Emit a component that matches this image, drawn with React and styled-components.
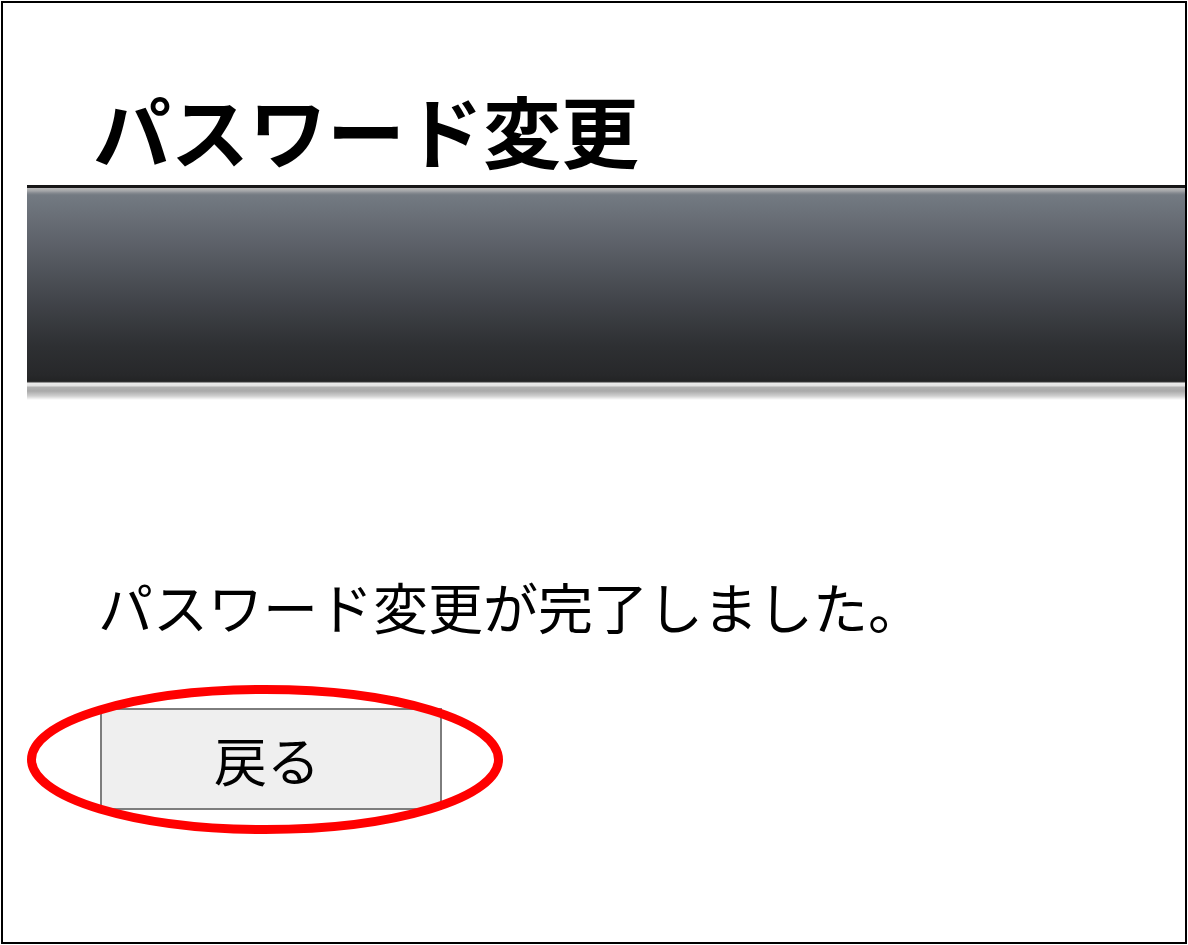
import React from "react";
import styled, { createGlobalStyle } from "styled-components";

const Global = createGlobalStyle`
  html, body { margin: 0; padding: 0; background: #fff; }
  body { font-family: "Noto Sans CJK JP", "Noto Sans", sans-serif; }
  * { box-sizing: border-box; }
`;

const Frame = styled.div`
  position: relative;
  margin: 1px;
  width: 1186px;
  height: 943px;
  border: 2px solid #000;
  background: #fff;
  display: flex;
  flex-direction: column;
  overflow: hidden;
`;

const Title = styled.h1`
  margin: 87px 0 0 90px;
  font-size: 78px;
  line-height: 1;
  font-weight: 700;
  color: #000;
  letter-spacing: 0;
`;

const Bar = styled.div`
  margin: 17px 0 0 24px;
  height: 215px;
  background: linear-gradient(
    to bottom,
    #141414 0px,
    #1a1a1a 3px,
    #b9b9b9 3px,
    #a3a5a8 6px,
    #858a90 8px,
    #737a82 10px,
    #5c6068 60px,
    #44474d 110px,
    #2e3033 160px,
    #27282a 190px,
    #232425 196px,
    #3c3c3c 197px,
    #ececec 198px,
    #e2e2e2 201px,
    #b2b2b2 202px,
    #a9a9a9 206px,
    #cfcfcf 211px,
    #ffffff 215px
  );
`;

const Message = styled.p`
  margin: 178px 0 0 95px;
  font-size: 55px;
  line-height: 1;
  font-weight: 400;
  color: #000;
`;

const ButtonWrap = styled.div`
  position: relative;
  margin: 75px 0 0 97px;
  width: 342px;
  height: 102px;
`;

const BackButton = styled.button`
  width: 100%;
  height: 100%;
  background: #efefef;
  border: 2px solid #7d7d7d;
  border-radius: 0;
  font-family: "Noto Sans CJK JP", "Noto Sans", sans-serif;
  font-size: 53px;
  line-height: 1;
  color: #000;
  padding: 0 8px 0 0;
  cursor: pointer;
`;

const Ring = styled.svg`
  position: absolute;
  left: -73px;
  top: -23px;
  width: 476px;
  height: 149px;
  pointer-events: none;
  overflow: visible;
`;

export default function App() {
  return (
    <>
      <Global />
      <Frame>
        <Title>パスワード変更</Title>
        <Bar />
        <Message>パスワード変更が完了しました。</Message>
        <ButtonWrap>
          <BackButton type="button">戻る</BackButton>
          <Ring viewBox="0 0 476 149">
            <ellipse cx="238" cy="74.5" rx="233.5" ry="70" fill="none" stroke="#ff0000" strokeWidth="9" />
          </Ring>
        </ButtonWrap>
      </Frame>
    </>
  );
}
